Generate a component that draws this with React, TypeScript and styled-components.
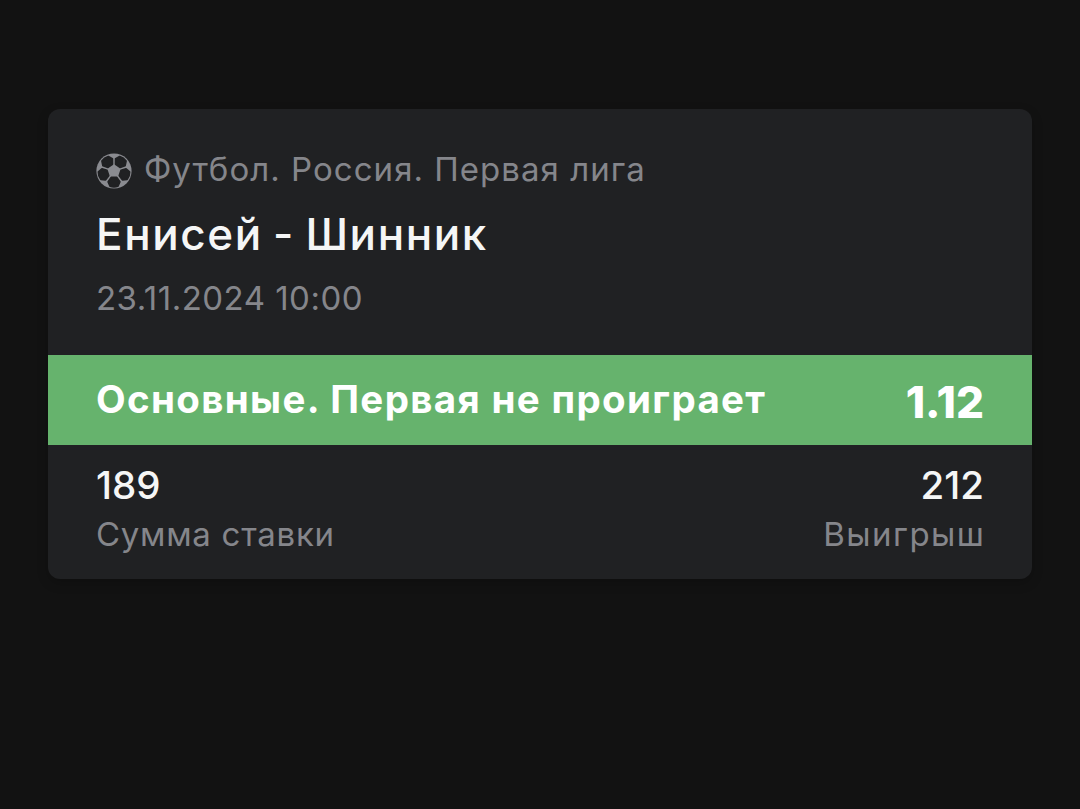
import styled, { createGlobalStyle } from 'styled-components'

const GlobalStyle = createGlobalStyle`
  body {
    margin: 0;
    background: #121212;
    font-family: Inter, 'Open Sans', sans-serif;
  }
`

const Page = styled.main`
  box-sizing: border-box;
  min-height: 809px;
  padding: 109px 48px 0;
  background: #121212;
`

const Card = styled.article`
  height: 470px;
  border-radius: 12px;
  background: #202123;
  box-shadow: 0 4px 12px rgba(0, 0, 0, 0.2);
  overflow: hidden;
`

const CardHeader = styled.header`
  box-sizing: border-box;
  height: 246px;
  padding: 40px 48px 0;
`

const Muted = styled.div<{ $spacing: number }>`
  margin-right: ${(p) => -p.$spacing}px;
  font-size: 33px;
  line-height: 40px;
  font-weight: 400;
  letter-spacing: ${(p) => p.$spacing}px;
  white-space: nowrap;
  color: #85868b;
`

const League = styled.div`
  display: flex;
  align-items: center;
  gap: 12px;

  svg {
    flex: none;
    margin-top: 4px;
  }
`

const Teams = styled.h1`
  margin: 17px 0 16px;
  font-size: 44px;
  line-height: 56px;
  font-weight: 500;
  letter-spacing: 1.6px;
  word-spacing: -3px;
  color: #f5f6f6;
`

const Outcome = styled.section`
  display: flex;
  justify-content: space-between;
  align-items: center;
  box-sizing: border-box;
  height: 90px;
  padding: 0 48px;
  background: #66b36d;
  color: #fff;
  white-space: nowrap;
`

const Market = styled.span`
  padding-bottom: 2px;
  font-size: 38.5px;
  line-height: 48px;
  font-weight: 700;
  letter-spacing: 1.34px;
`

const Odds = styled.span`
  padding-top: 4px;
  font-size: 44px;
  line-height: 48px;
  font-weight: 800;
`

const Totals = styled.footer`
  display: flex;
  justify-content: space-between;
  padding: 16px 48px 0;
`

const Total = styled.div<{ $right?: boolean }>`
  text-align: ${(p) => (p.$right ? 'right' : 'left')};
`

const Amount = styled.div`
  margin-bottom: 5px;
  font-size: 38.5px;
  line-height: 48px;
  font-weight: 500;
  color: #f5f6f6;
`

const BallIcon = () => (
  <svg width="36" height="36" viewBox="0 0 36 36">
    <circle cx="18" cy="18" r="17.6" fill="#8a8b90" />
    <g fill="#202123" stroke="#202123" strokeWidth="2" strokeLinejoin="round">
      {[0, 72, 144, 216, 288].map((angle) => (
        <path
          key={angle}
          transform={`rotate(${angle} 18 18)`}
          d="M15.300 24.600h5.400l3 4.200-1.900 4.200q-3.800 1.400-7.600 0l-1.900-4.200z"
        />
      ))}
    </g>
  </svg>
)

export default function App() {
  return (
    <>
      <GlobalStyle />
      <Page>
        <Card>
          <CardHeader>
            <League>
              <BallIcon />
              <Muted $spacing={1.03}>Футбол. Россия. Первая лига</Muted>
            </League>
            <Teams>Енисей - Шинник</Teams>
            <Muted $spacing={0.48}>23.11.2024 10:00</Muted>
          </CardHeader>
          <Outcome>
            <Market>Основные. Первая не проиграет</Market>
            <Odds>1.12</Odds>
          </Outcome>
          <Totals>
            <Total>
              <Amount>189</Amount>
              <Muted $spacing={0.72}>Сумма ставки</Muted>
            </Total>
            <Total $right>
              <Amount>212</Amount>
              <Muted $spacing={1.45}>Выигрыш</Muted>
            </Total>
          </Totals>
        </Card>
      </Page>
    </>
  )
}
